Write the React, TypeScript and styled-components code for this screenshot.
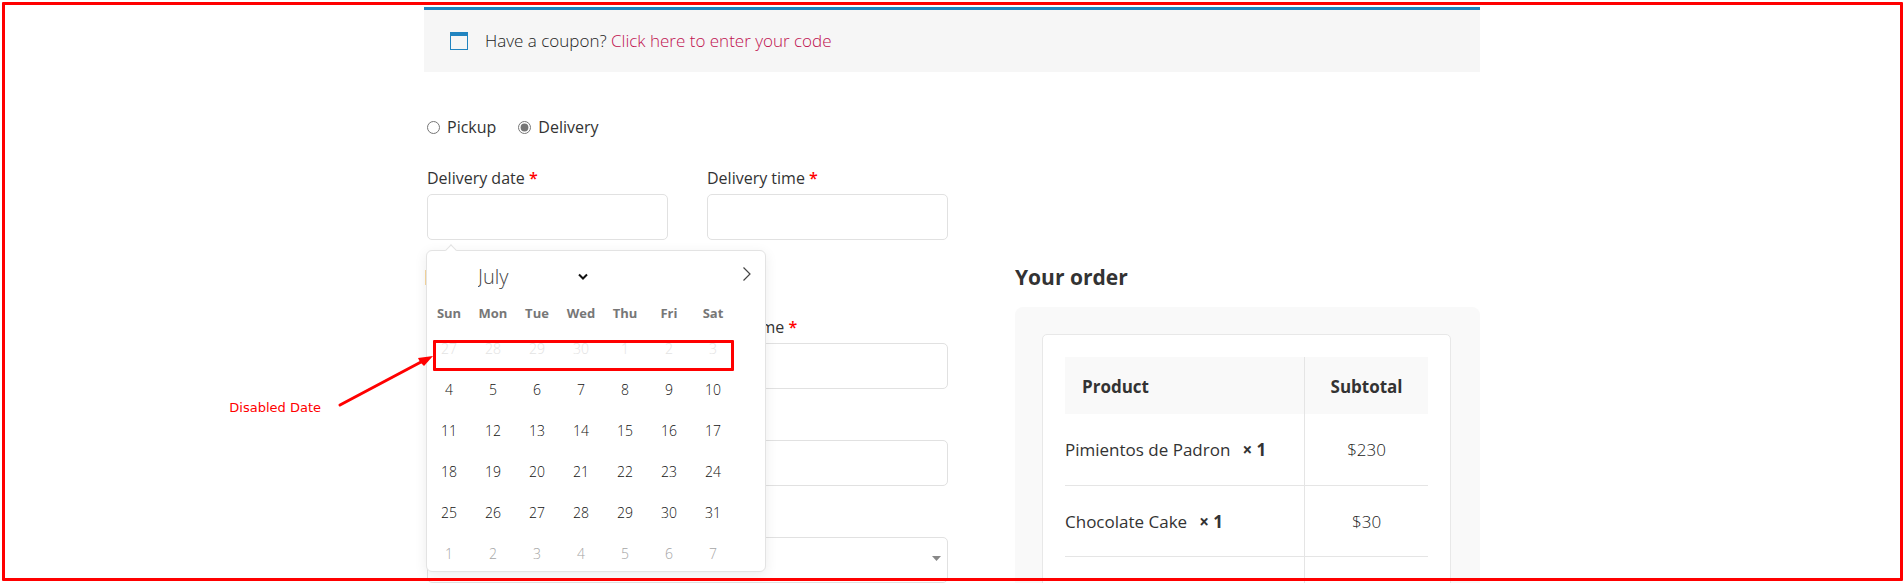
import React, { useState } from "react";
import styled, { createGlobalStyle } from "styled-components";

const GlobalStyle = createGlobalStyle`
  *, *::before, *::after { box-sizing: border-box; }
  body {
    margin: 0;
    background: #fff;
    color: #333;
    font-family: "Open Sans", "Noto Sans", sans-serif;
    font-size: 16px;
    line-height: 24px;
  }
  input, select, button { font: inherit; color: inherit; }
`;

const Page = styled.div`
  position: relative;
  height: 100vh;
  overflow: hidden;
  padding-top: 7px;
`;

const Frame = styled.div`
  position: absolute;
  inset: 2px 1px 2px 2px;
  border: 3px solid #f00;
  border-radius: 1px;
  pointer-events: none;
  z-index: 5;
`;

const Container = styled.main`
  max-width: 1056px;
  margin: 0 auto;
`;

const Notice = styled.div`
  display: flex;
  align-items: center;
  gap: 17px;
  padding: 19px 26px;
  border-top: 3px solid #2184c0;
  background: #f6f6f6;
  color: #222;
  font-size: 17px;
  font-weight: 300;
`;

const CouponLink = styled.a`
  color: #c0104f;
  text-decoration: none;
`;

const MethodRow = styled.div`
  display: flex;
  gap: 22px;
  margin: 43px 3px 27px;
`;

const Method = styled.label`
  display: flex;
  align-items: center;
  gap: 7px;
`;

const Radio = styled.input`
  width: 13px;
  height: 13px;
  margin: 0;
  accent-color: #767676;
  filter: grayscale(1);
`;

const Columns = styled.div`
  display: grid;
  grid-template-columns: minmax(0, 1fr) 465px;
  gap: 67px;
`;

const FieldGrid = styled.div`
  display: grid;
  grid-template-columns: 1fr 1fr;
  gap: 23px 39px;
  width: 521px;
  max-width: 100%;
  margin-left: 3px;
`;

const Field = styled.div<{ $wide?: boolean }>`
  position: relative;
  display: flex;
  flex-direction: column;
  gap: 4px;
  grid-column: ${(p) => (p.$wide ? "1 / -1" : "auto")};
`;

const Required = styled.span`
  color: #f00;
  font-weight: 600;
`;

const TextInput = styled.input`
  width: 100%;
  height: 46px;
  padding: 0 12px;
  border: 1px solid #e1e1e1;
  border-radius: 5px;
  background: #fff;
  outline: none;
`;

const SelectWrap = styled.div`
  position: relative;
  display: grid;

  svg {
    position: absolute;
    right: 7px;
    top: 19px;
    pointer-events: none;
  }
`;

const CountrySelect = styled.select`
  height: 46px;
  padding: 0 12px;
  border: 1px solid #e1e1e1;
  border-radius: 5px;
  background: #fff;
  appearance: none;
`;

const Heading = styled.h3`
  margin: 22px 0 0;
  font-size: 21px;
  line-height: 30px;
  font-weight: 700;
`;

const BillingFields = styled(FieldGrid)`
  margin-top: 23px;
`;

const OrderPanel = styled.div`
  margin-top: 15px;
  padding: 27px 29px 27px 27px;
  border-radius: 8px;
  background: #f9f9f9;
`;

const OrderCard = styled.div`
  padding: 22px;
  border: 1px solid #e8e8e8;
  border-radius: 5px;
  background: #fff;
`;

const OrderTable = styled.table`
  width: 100%;
  border-collapse: collapse;
  table-layout: fixed;
  font-size: 17px;

  th, td {
    padding: 0;
    text-align: left;
    font-weight: 400;
  }
  th:last-child, td:last-child {
    width: 34%;
    border-left: 1px solid #e5e5e5;
    text-align: center;
    font-weight: 300;
    color: #222;
  }
  thead th, thead th:last-child {
    height: 57px;
    padding-top: 2px;
    background: #f9f9f9;
    color: #333;
    font-weight: 700;
  }
  thead th:first-child { padding-left: 17px; }
  tbody td {
    height: 71px;
    padding-top: 2px;
    border-bottom: 1px solid #e5e5e5;
  }
`;

const Quantity = styled.strong`
  margin-left: 12px;
`;

const Calendar = styled.div`
  position: absolute;
  top: 84px;
  left: -1px;
  z-index: 2;
  width: 340px;
  border: 1px solid #e3e3e3;
  border-radius: 6px;
  background: #fff;
  box-shadow: 0 3px 13px rgba(0, 0, 0, 0.08);

  &::before {
    content: "";
    position: absolute;
    top: -5px;
    left: 20px;
    width: 8px;
    height: 8px;
    border: 1px solid #e3e3e3;
    border-width: 1px 0 0 1px;
    background: #fff;
    transform: rotate(45deg);
  }
`;

const MonthBar = styled.div`
  display: flex;
  align-items: center;
  justify-content: space-between;
  height: 52px;
  padding: 0 11px 0 48px;
`;

const MonthPicker = styled.div`
  position: relative;
  display: flex;

  svg {
    position: absolute;
    right: 5px;
    top: 12px;
    pointer-events: none;
  }
`;

const MonthSelect = styled.select`
  width: 118px;
  height: 32px;
  padding: 0 3px;
  border: 0;
  background: transparent;
  appearance: none;
  color: #444;
  font-size: 20px;
  font-weight: 300;
`;

const NextButton = styled.button`
  display: grid;
  place-items: center;
  width: 14px;
  height: 22px;
  margin-bottom: 6px;
  padding: 0;
  border: 0;
  background: none;
`;

const Weekdays = styled.div`
  display: grid;
  grid-template-columns: repeat(7, 44px);
  height: 28px;
  color: #777;
  font-size: 13px;
  font-weight: 700;
  line-height: 20px;
  text-align: center;
`;

const Days = styled.div`
  display: grid;
  grid-template-columns: repeat(7, 44px);
  row-gap: 6px;
`;

const Day = styled.button<{ $tone: string }>`
  height: 35px;
  padding: 0;
  border: 0;
  background: none;
  color: ${(p) => p.$tone};
  font-size: 14px;
  font-weight: 300;
`;

const DisabledMark = styled.div`
  position: absolute;
  top: 89px;
  left: 6px;
  width: 301px;
  height: 31px;
  border: 3px solid #f00;
  border-radius: 1px;
  pointer-events: none;
`;

const Callout = styled.div`
  position: absolute;
  top: 104px;
  right: 332px;
  display: flex;
  align-items: flex-end;
  gap: 16px;
  color: #f00;
  font-family: "DejaVu Sans", sans-serif;
  font-size: 13px;
  line-height: 18px;
  white-space: nowrap;

  svg { margin-bottom: 8px; }
`;

const MUTED = "#e3e3e3";
const NORMAL = "#111";
const OUTSIDE = "#a5a5a5";

const dates = [
  ...[27, 28, 29, 30, 1, 2, 3].map((n) => ({ n, tone: MUTED })),
  ...Array.from({ length: 28 }, (_, i) => ({ n: i + 4, tone: NORMAL })),
  ...Array.from({ length: 7 }, (_, i) => ({ n: i + 1, tone: OUTSIDE })),
];

const months = ["July", "August", "September", "October", "November", "December"];

const order = [
  { name: "Pimientos de Padron", price: "$230" },
  { name: "Chocolate Cake", price: "$30" },
];

function CouponIcon() {
  return (
    <svg width="18" height="18" viewBox="0 0 18 18" aria-hidden="true">
      <rect x="0.5" y="0.5" width="17" height="17" fill="none" stroke="#2184c0" />
      <rect width="18" height="4" fill="#2184c0" />
    </svg>
  );
}

function DatePicker() {
  return (
    <Calendar>
      <MonthBar>
        <MonthPicker>
          <MonthSelect aria-label="Month">
            {months.map((m) => (
              <option key={m}>{m}</option>
            ))}
          </MonthSelect>
          <svg width="10" height="8" viewBox="0 0 10 8" aria-hidden="true">
            <path d="M1 1.5 L5 5.5 L9 1.5" fill="none" stroke="#111" strokeWidth="2" />
          </svg>
        </MonthPicker>
        <NextButton type="button" aria-label="Next month">
          <svg width="10" height="14" viewBox="0 0 10 14" aria-hidden="true">
            <path d="M1.5 0.5 L8 7 L1.5 13.5" fill="none" stroke="#444" strokeWidth="1.2" />
          </svg>
        </NextButton>
      </MonthBar>
      <Weekdays>
        {["Sun", "Mon", "Tue", "Wed", "Thu", "Fri", "Sat"].map((d) => (
          <span key={d}>{d}</span>
        ))}
      </Weekdays>
      <Days>
        {dates.map((d, i) => (
          <Day key={i} type="button" $tone={d.tone} disabled={d.tone === MUTED}>
            {d.n}
          </Day>
        ))}
      </Days>
      <DisabledMark />
      <Callout>
        <span>Disabled Date</span>
        <svg width="96" height="54" viewBox="0 0 96 54" aria-hidden="true">
          <path d="M3 50 L84 7" stroke="#f00" strokeWidth="3" strokeLinecap="round" />
          <path d="M96 1 L81 3 L83 7 L87 11 Z" fill="#f00" />
        </svg>
      </Callout>
    </Calendar>
  );
}

export default function App() {
  const [method, setMethod] = useState("Delivery");

  return (
    <Page>
      <GlobalStyle />
      <Container>
        <Notice>
          <CouponIcon />
          <span>
            Have a coupon? <CouponLink href="#coupon">Click here to enter your code</CouponLink>
          </span>
        </Notice>

        <MethodRow>
          {["Pickup", "Delivery"].map((m) => (
            <Method key={m}>
              <Radio type="radio" name="method" checked={method === m} onChange={() => setMethod(m)} />
              {m}
            </Method>
          ))}
        </MethodRow>

        <FieldGrid>
          <Field>
            <label htmlFor="date">
              Delivery date <Required>*</Required>
            </label>
            <TextInput id="date" />
            <DatePicker />
          </Field>
          <Field>
            <label htmlFor="time">
              Delivery time <Required>*</Required>
            </label>
            <TextInput id="time" />
          </Field>
        </FieldGrid>

        <Columns>
          <section>
            <Heading>Billing details</Heading>
            <BillingFields>
              <Field>
                <label htmlFor="first">
                  First name <Required>*</Required>
                </label>
                <TextInput id="first" />
              </Field>
              <Field>
                <label htmlFor="last">
                  Last name <Required>*</Required>
                </label>
                <TextInput id="last" />
              </Field>
              <Field $wide>
                <label htmlFor="company">Company name (optional)</label>
                <TextInput id="company" />
              </Field>
              <Field $wide>
                <label htmlFor="country">
                  Country / Region <Required>*</Required>
                </label>
                <SelectWrap>
                  <CountrySelect id="country">
                    <option>United States (US)</option>
                  </CountrySelect>
                  <svg width="9" height="5" viewBox="0 0 9 5" aria-hidden="true">
                    <path d="M0 0 H9 L4.5 5 Z" fill="#888" />
                  </svg>
                </SelectWrap>
              </Field>
            </BillingFields>
          </section>

          <section>
            <Heading>Your order</Heading>
            <OrderPanel>
              <OrderCard>
                <OrderTable>
                  <thead>
                    <tr>
                      <th scope="col">Product</th>
                      <th scope="col">Subtotal</th>
                    </tr>
                  </thead>
                  <tbody>
                    {order.map((item) => (
                      <tr key={item.name}>
                        <td>
                          {item.name}
                          <Quantity>× 1</Quantity>
                        </td>
                        <td>{item.price}</td>
                      </tr>
                    ))}
                    <tr>
                      <td />
                      <td />
                    </tr>
                  </tbody>
                </OrderTable>
              </OrderCard>
            </OrderPanel>
          </section>
        </Columns>
      </Container>
      <Frame />
    </Page>
  );
}
